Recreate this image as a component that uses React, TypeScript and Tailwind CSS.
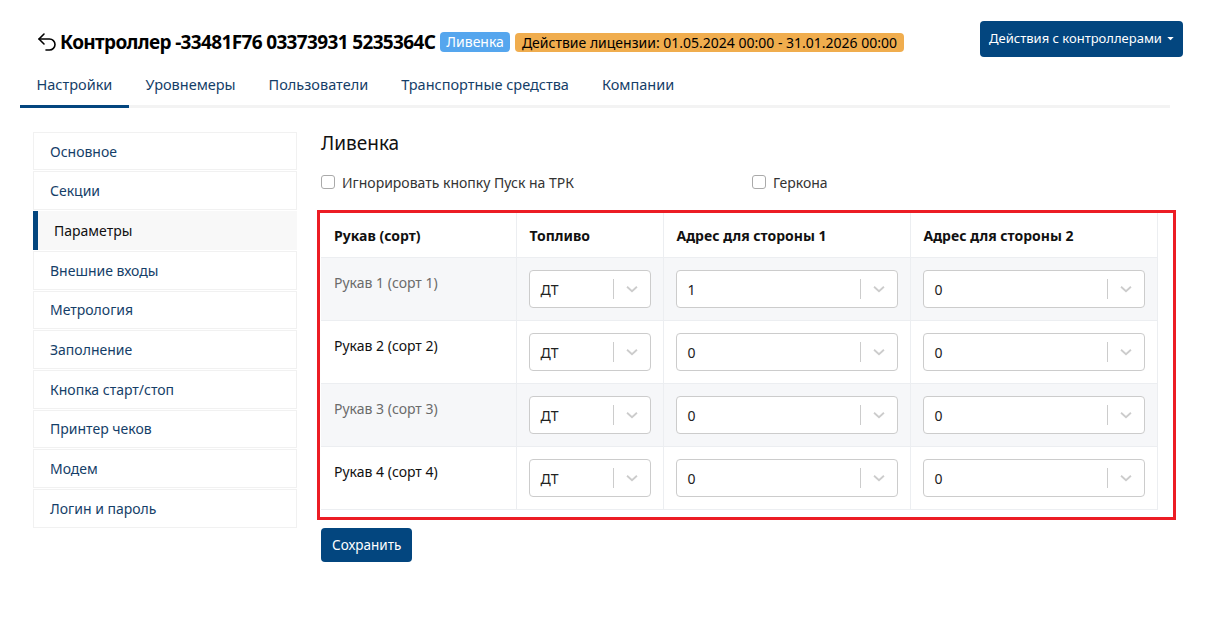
import React from "react";
import { Undo2 } from "lucide-react";

const tabs = ["Настройки", "Уровнемеры", "Пользователи", "Транспортные средства", "Компании"];
const side = [
  "Основное",
  "Секции",
  "Параметры",
  "Внешние входы",
  "Метрология",
  "Заполнение",
  "Кнопка старт/стоп",
  "Принтер чеков",
  "Модем",
  "Логин и пароль",
];
const rows = [
  { name: "Рукав 1 (сорт 1)", a: "1", b: "0" },
  { name: "Рукав 2 (сорт 2)", a: "0", b: "0" },
  { name: "Рукав 3 (сорт 3)", a: "0", b: "0" },
  { name: "Рукав 4 (сорт 4)", a: "0", b: "0" },
];

function Select({ value }: { value: string }) {
  return (
    <div className="flex h-[38px] items-center rounded-[4px] border border-[#cccccc] bg-white">
      <div className="flex-1 pl-[11px] text-[14px] text-[#222]">{value}</div>
      <div className="h-[20px] w-px bg-[#cccccc]" />
      <div className="flex w-[36px] items-center justify-center">
        <svg width="18" height="18" viewBox="0 0 20 20">
          <path d="M4.5 7.5 10 12.5 15.5 7.5" fill="none" stroke="#cccccc" strokeWidth="2" />
        </svg>
      </div>
    </div>
  );
}

export default function App() {
  return (
    <div className="min-h-[618px] bg-white font-['Noto_Sans',sans-serif] text-[#212529]">
      <div className="flex items-start justify-between pl-[35px] pr-[25px] pt-[21px]">
        <div className="mt-[9px] flex items-center">
          <Undo2 size={24} strokeWidth={1.6} className="text-black" />
          <span className="ml-[1px] text-[19px] font-bold leading-[24px] tracking-[-0.65px] text-black">
            Контроллер -33481F76 03373931 5235364C
          </span>
          <span className="ml-[5px] rounded-[4px] bg-[#55a6ee] px-[6px] py-[1px] text-[14px] leading-[18px] text-white">
            Ливенка
          </span>
          <span className="ml-[5px] rounded-[4px] bg-[#f0ad4e] px-[7px] py-[1px] text-[14px] leading-[17px] text-black">
            Действие лицензии: 01.05.2024 00:00 - 31.01.2026 00:00
          </span>
        </div>
        <button className="flex h-[36px] w-[203px] items-center justify-center gap-[5px] rounded-[4px] bg-[#03467f] text-[13px] text-white">
          Действия с контроллерами
          <svg width="7" height="4" viewBox="0 0 8 5">
            <path d="M0 0h8L4 4z" fill="white" />
          </svg>
        </button>
      </div>

      <div className="ml-[20px] mr-[38px] mt-[10px] flex border-b-[3px] border-[#f3f3f3]">
        {tabs.map((t, i) => (
          <div
            key={t}
            className={
              "-mb-[3px] px-[16.5px] pb-[9px] pt-[7px] text-[14.5px] text-[#153e68] " +
              (i === 0 ? "border-b-[3px] border-[#03467f]" : "border-b-[3px] border-transparent")
            }
          >
            {t}
          </div>
        ))}
      </div>

      <div className="mt-[24px] flex pl-[33px] pr-[25px]">
        <div className="flex w-[264px] flex-col gap-px">
          {side.map((s, i) =>
            i === 2 ? (
              <div
                key={s}
                className="flex h-[38.7px] items-center border-l-[5px] border-[#03467f] bg-[#f8f8f8] pl-[16px] text-[14px] text-[#111]"
              >
                {s}
              </div>
            ) : (
              <div
                key={s}
                className="flex h-[38.7px] items-center border border-[#f1f1f1] pl-[16px] text-[14px] text-[#153e68]"
              >
                {s}
              </div>
            )
          )}
        </div>

        <div className="ml-[24px] flex-1">
          <div className="mt-[-1px] text-[19px] leading-[24px] text-[#111]">Ливенка</div>
          <div className="mt-[17px] grid grid-cols-2 text-[14px] text-[#333]">
            <label className="flex items-center gap-[7px]">
              <span className="h-[14px] w-[14px] rounded-[3px] border border-[#aaa] bg-white" />
              Игнорировать кнопку Пуск на ТРК
            </label>
            <label className="flex items-center gap-[7px]">
              <span className="h-[14px] w-[14px] rounded-[3px] border border-[#aaa] bg-white" />
              Геркона
            </label>
          </div>

          <div className="-ml-[4px] mr-[7px] mt-[17px] border-[3px] border-[#ec1c24] pb-[7px] pl-px pr-[15px]">
            <table className="w-full table-fixed border-collapse text-[14px]">
              <colgroup>
                <col className="w-[195px]" />
                <col className="w-[147px]" />
                <col className="w-[247px]" />
                <col />
              </colgroup>
              <thead>
                <tr className="h-[45px] border-b border-[#eceef1]">
                  {["Рукав (сорт)", "Топливо", "Адрес для стороны 1", "Адрес для стороны 2"].map((h) => (
                    <th key={h} className="border-r border-[#eceef1] pl-[13px] text-left font-bold text-[#111]">
                      {h}
                    </th>
                  ))}
                </tr>
              </thead>
              <tbody>
                {rows.map((r, i) => (
                  <tr
                    key={r.name}
                    className={
                      "h-[63px] border-b border-[#eceef1] " +
                      (i % 2 === 0 ? "bg-[#f6f7f9] text-[#6b6b6b]" : "bg-white text-[#111]")
                    }
                  >
                    <td className="border-r border-[#eceef1] pl-[13px] pt-[14px] align-top">{r.name}</td>
                    <td className="border-r border-[#eceef1] px-[12px] py-[12px]">
                      <Select value="ДТ" />
                    </td>
                    <td className="border-r border-[#eceef1] px-[12px] py-[12px]">
                      <Select value={r.a} />
                    </td>
                    <td className="border-r border-[#eceef1] px-[12px] py-[12px]">
                      <Select value={r.b} />
                    </td>
                  </tr>
                ))}
              </tbody>
            </table>
          </div>

          <button className="mt-[8px] h-[34px] rounded-[4px] bg-[#03467f] px-[11px] text-[13.5px] text-white">
            Сохранить
          </button>
        </div>
      </div>
    </div>
  );
}
